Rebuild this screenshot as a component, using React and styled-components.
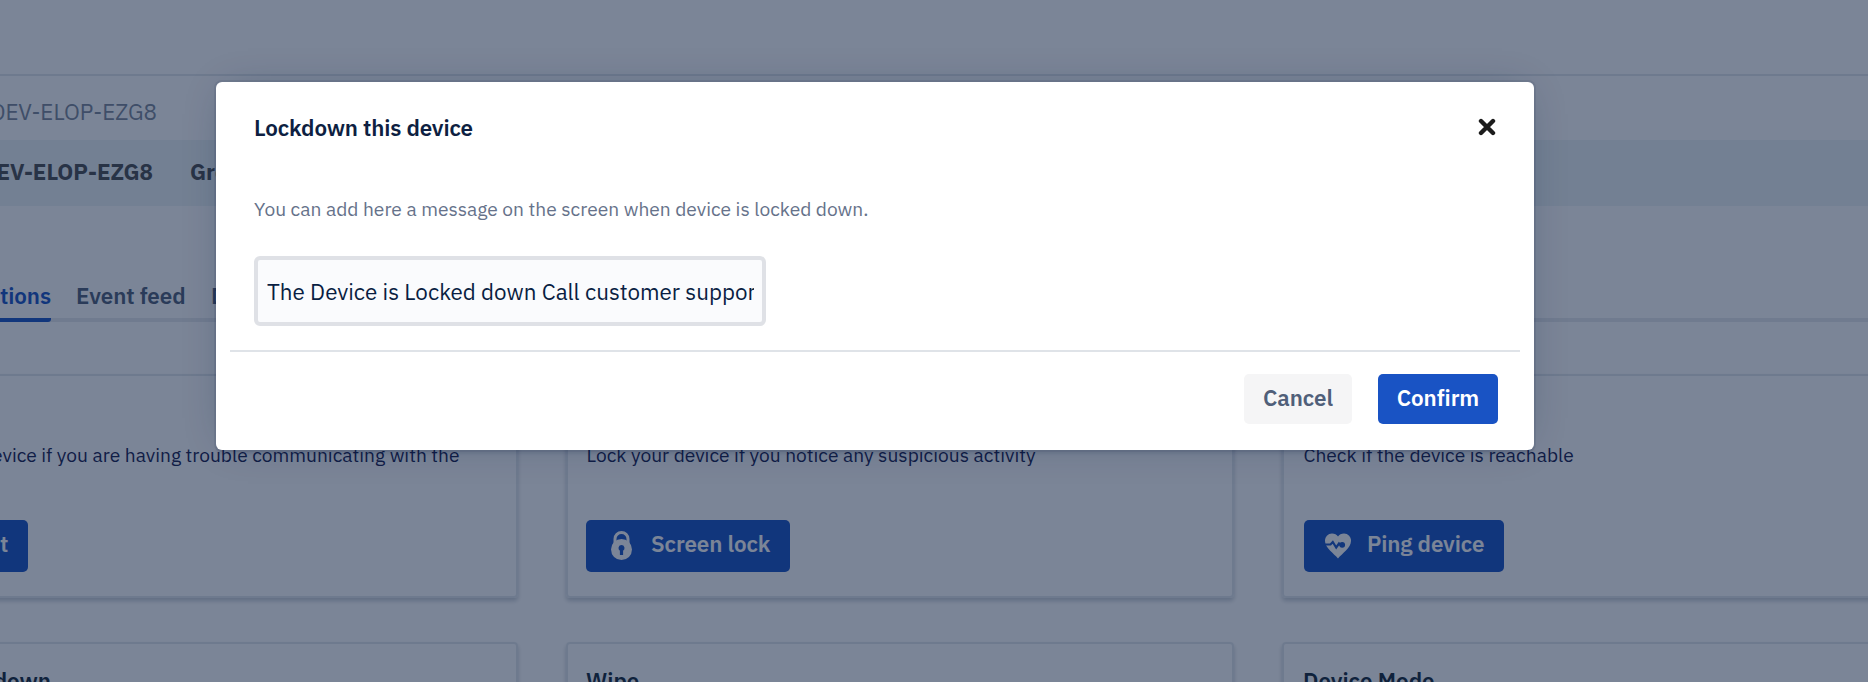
import React from "react";
import styled, { createGlobalStyle } from "styled-components";

const GlobalStyle = createGlobalStyle`
  * { box-sizing: border-box; }
  body { margin: 0; background: #fff; font-family: "IBM Plex Sans", Roboto, "Liberation Sans", sans-serif; }
  h2, h3, p { margin: 0; }
  button, input { font-family: inherit; }
`;

const Screen = styled.div`
  position: relative;
  width: 1868px;
  height: 682px;
  overflow: hidden;
  background: #fff;
  white-space: nowrap;
`;

const TopBar = styled.header`
  height: 76px;
  border-bottom: 2px solid #e3e8ec;
`;

const Breadcrumb = styled.nav`
  display: flex;
  justify-content: flex-end;
  width: 157px;
  height: 64px;
  padding-top: 22px;
  font-size: 22.4px;
  line-height: 28px;
  color: #7c8799;
`;

const InfoBand = styled.div`
  display: flex;
  gap: 37px;
  height: 66px;
  padding-top: 18px;
  background: #eef3f7;
  color: #4b4d50;
  font-size: 22.4px;
  font-weight: 700;
  line-height: 28px;
  letter-spacing: -0.05px;
`;

const DeviceName = styled.span`
  display: flex;
  justify-content: flex-end;
  width: 153px;
`;

const Tabs = styled.div`
  display: flex;
  gap: 25px;
  height: 116px;
  padding-top: 76px;
  border-bottom: 4px solid #e6eaee;
`;

const Tab = styled.div`
  display: flex;
  justify-content: ${(p) => (p.$active ? "flex-end" : "flex-start")};
  flex: none;
  width: ${(p) => p.$width}px;
  height: 40px;
  margin-bottom: -4px;
  font-size: 22.4px;
  font-weight: 600;
  line-height: 28px;
  letter-spacing: -0.1px;
  color: ${(p) => (p.$active ? "#1953c4" : "#505f79")};
  border-bottom: 4px solid ${(p) => (p.$active ? "#1953c4" : "transparent")};
  border-radius: 0 0 3px 0;
`;

const CardGrid = styled.main`
  display: grid;
  grid-template-columns: repeat(3, 667.5px);
  grid-template-rows: 224px 224px;
  gap: 44px 48.5px;
  margin: 52px 0 0 -150px;
`;

const Card = styled.section`
  display: flex;
  flex-direction: column;
  align-items: flex-start;
  padding: 20px 18px;
  border: 2px solid #e3e8ec;
  border-radius: 4px;
  box-shadow: 0 3px 4px rgba(9, 30, 66, 0.22);

  &:nth-child(3n) {
    padding-left: 19px;
  }
`;

const CardTitle = styled.h3`
  display: flex;
  justify-content: ${(p) => (p.$end ? "flex-end" : "flex-start")};
  width: ${(p) => (p.$end ? "181px" : "auto")};
  font-size: 22.4px;
  font-weight: 600;
  line-height: 34px;
  color: #14283a;
`;

const CardText = styled.p`
  display: flex;
  justify-content: ${(p) => (p.$end ? "flex-end" : "flex-start")};
  width: ${(p) => (p.$end ? "589px" : "auto")};
  height: 24px;
  margin: 13px 0 53px 0.5px;
  font-size: 19.2px;
  line-height: 24px;
  color: #172050;
`;

const ActionButton = styled.button`
  display: flex;
  align-items: center;
  gap: ${(p) => p.$gap || 18}px;
  width: ${(p) => p.$width}px;
  height: 52px;
  margin-left: ${(p) => p.$shift || 0}px;
  padding: 0 0 0 ${(p) => p.$inset || 24}px;
  border: 0;
  border-radius: 5px;
  background: #1953c4;
  color: #fff;
  font-size: 22.4px;
  font-weight: 600;
  letter-spacing: -0.12px;

  svg {
    flex: none;
  }
`;

const ActionLabel = styled.span`
  padding-bottom: 6px;
`;

const Blanket = styled.div`
  position: absolute;
  inset: 0;
  padding: 82px 0 0 216px;
  background: rgba(11, 29, 62, 0.54);
`;

const Dialog = styled.div`
  width: 1318px;
  height: 368px;
  border-radius: 6px;
  background: #fff;
  box-shadow: 0 0 0 2px rgba(9, 30, 66, 0.08), 0 4px 2px rgba(9, 30, 66, 0.08),
    0 0 40px -12px rgba(9, 30, 66, 0.31);
`;

const DialogHeader = styled.div`
  display: flex;
  align-items: flex-start;
  justify-content: space-between;
  height: 112px;
  padding: 32px 37px 0 38px;
`;

const DialogTitle = styled.h2`
  font-size: 22.4px;
  font-weight: 600;
  line-height: 28px;
  letter-spacing: -0.15px;
  color: #0e1f42;
`;

const CloseButton = styled.button`
  display: flex;
  margin: 4px 1px 0 0;
  padding: 0;
  border: 0;
  background: none;
`;

const DialogBody = styled.div`
  height: 158px;
  margin: 0 14px;
  padding: 3px 24px 0;
  border-bottom: 2px solid #dfe3e8;
`;

const Hint = styled.p`
  font-size: 19.2px;
  line-height: 24px;
  color: #66728a;
`;

const MessageInput = styled.input`
  display: block;
  width: 512px;
  height: 70px;
  margin-top: 35px;
  padding: 0 8px 0 9px;
  border: 4px solid #dfe1e6;
  border-radius: 6px;
  outline: none;
  background: #fafbfd;
  font-size: 22.4px;
  color: #091e42;
`;

const DialogFooter = styled.div`
  display: flex;
  justify-content: flex-end;
  gap: 26px;
  padding: 22px 36px 0;
`;

const FooterButton = styled.button`
  width: ${(p) => (p.$primary ? 120 : 108)}px;
  height: 50px;
  padding: 0 0 3px;
  border: 0;
  border-radius: 5px;
  background: ${(p) => (p.$primary ? "#1953c4" : "#f5f5f6")};
  color: ${(p) => (p.$primary ? "#fff" : "#505f79")};
  font-size: 22.4px;
  font-weight: 600;
  letter-spacing: -0.1px;
`;

const LockIcon = () => (
  <svg width="23" height="30" viewBox="0 0 23 30">
    <path d="M5 13V8a6.5 6.5 0 0 1 13 0v5" fill="none" stroke="#fff" strokeWidth="3" />
    <circle cx="11.5" cy="18.5" r="10.5" fill="#fff" />
    <path d="M11.500 14a3.100 3.100 0 0 1 1.600 5.700V24H9.900v-4.300a3.100 3.100 0 0 1 1.600-5.700z" fill="#1953c4" />
  </svg>
);

const HeartPulseIcon = () => (
  <svg width="26" height="26" viewBox="0 0 26 26">
    <path
      d="M13 25.500C9 20.500 0 15 0 8A7 7 0 0 1 7 .5c2.600 0 4.800 1.100 6 3C14.200 1.600 16.400.5 19 .5a7 7 0 0 1 7 7.500C26 15 17 20.500 13 25.500z"
      fill="#fff"
    />
    <path d="M0 11.500h5.500l2.300-2.500 3.400 5.500 2.800-4 2 2h2" fill="none" stroke="#1953c4" strokeWidth="2.200" />
    <circle cx="17.200" cy="11.800" r="2.900" fill="#1953c4" />
  </svg>
);

const CloseIcon = () => (
  <svg width="18" height="18" viewBox="0 0 18 18">
    <path d="M3 3l12 12M15 3L3 15" stroke="#1c1c1c" strokeWidth="4.400" strokeLinecap="round" />
  </svg>
);

export default function App() {
  return (
    <Screen>
      <GlobalStyle />
      <TopBar />
      <Breadcrumb>DEV-ELOP-EZG8</Breadcrumb>
      <InfoBand>
        <DeviceName>DEV-ELOP-EZG8</DeviceName>
        <span>Group</span>
      </InfoBand>
      <Tabs>
        <Tab $active $width={51}>Actions</Tab>
        <Tab $width={110}>Event feed</Tab>
        <Tab $width={100}>Details</Tab>
      </Tabs>
      <CardGrid>
        <Card>
          <CardTitle>Reboot</CardTitle>
          <CardText $end>Reboot your device if you are having trouble communicating with the</CardText>
          <ActionButton $width={158}>
            <LockIcon />
            <ActionLabel>Reboot</ActionLabel>
          </ActionButton>
        </Card>
        <Card>
          <CardTitle>Screen lock</CardTitle>
          <CardText>Lock your device if you notice any suspicious activity</CardText>
          <ActionButton $width={204}>
            <LockIcon />
            <ActionLabel>Screen lock</ActionLabel>
          </ActionButton>
        </Card>
        <Card>
          <CardTitle>Ping</CardTitle>
          <CardText>Check if the device is reachable</CardText>
          <ActionButton $width={200} $inset={21} $gap={16} $shift={1}>
            <HeartPulseIcon />
            <ActionLabel>Ping device</ActionLabel>
          </ActionButton>
        </Card>
        <Card>
          <CardTitle $end>Device lockdown</CardTitle>
        </Card>
        <Card>
          <CardTitle>Wipe</CardTitle>
        </Card>
        <Card>
          <CardTitle>Device Mode</CardTitle>
        </Card>
      </CardGrid>
      <Blanket>
        <Dialog role="dialog">
          <DialogHeader>
            <DialogTitle>Lockdown this device</DialogTitle>
            <CloseButton aria-label="Close">
              <CloseIcon />
            </CloseButton>
          </DialogHeader>
          <DialogBody>
            <Hint>You can add here a message on the screen when device is locked down.</Hint>
            <MessageInput defaultValue="The Device is Locked down Call customer support" />
          </DialogBody>
          <DialogFooter>
            <FooterButton>Cancel</FooterButton>
            <FooterButton $primary>Confirm</FooterButton>
          </DialogFooter>
        </Dialog>
      </Blanket>
    </Screen>
  );
}
